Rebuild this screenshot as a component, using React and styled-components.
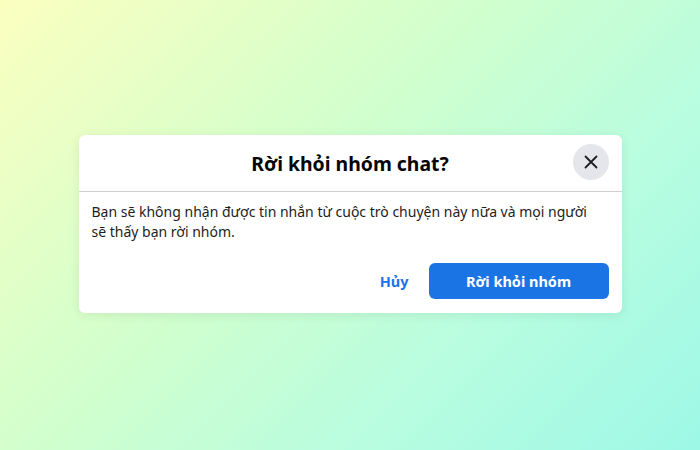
import React from "react";
import styled, { createGlobalStyle } from "styled-components";

const Global = createGlobalStyle`
  html, body { margin: 0; padding: 0; }
  body {
    width: 700px;
    height: 450px;
    font-family: "Noto Sans", "Open Sans", "Liberation Sans", sans-serif;
    overflow: hidden;
  }
`;

const Backdrop = styled.div`
  width: 700px;
  height: 450px;
  background: linear-gradient(135deg, #fbffc0 0%, #d2ffcc 40%, #b8fde0 70%, #9df8e6 100%);
  display: flex;
  align-items: center;
  justify-content: center;
`;

const Dialog = styled.div`
  width: 543px;
  margin-top: -2px;
  background: #ffffff;
  border-radius: 6px;
  box-shadow: 0 2px 12px rgba(0, 0, 0, 0.08);
  display: flex;
  flex-direction: column;
`;

const Header = styled.div`
  position: relative;
  height: 56px;
  display: flex;
  align-items: center;
  justify-content: center;
  border-bottom: 1px solid #ced0d4;
`;

const Title = styled.h2`
  margin: 0;
  font-size: 19.4px;
  font-weight: 700;
  color: #050505;
`;

const CloseButton = styled.button`
  position: absolute;
  right: 13px;
  top: 9px;
  width: 36px;
  height: 36px;
  border-radius: 50%;
  border: none;
  background: #e4e6eb;
  display: flex;
  align-items: center;
  justify-content: center;
  padding: 0;
  cursor: pointer;
`;

const Body = styled.p`
  margin: 0;
  padding: 10px 0 0 13px;
  width: 496px;
  font-size: 14px;
  line-height: 20px;
  color: #1c1e21;
`;

const Actions = styled.div`
  display: flex;
  justify-content: flex-end;
  align-items: center;
  gap: 20px;
  padding: 21px 13px 14px;
`;

const TextButton = styled.button`
  border: none;
  background: transparent;
  font-family: inherit;
  font-size: 14.5px;
  font-weight: 700;
  color: #1b74e4;
  padding: 0;
  height: 36px;
  cursor: pointer;
`;

const PrimaryButton = styled.button`
  border: none;
  width: 180px;
  height: 36px;
  border-radius: 6px;
  background: #1b74e4;
  color: #ffffff;
  font-family: inherit;
  font-size: 14.5px;
  font-weight: 700;
  cursor: pointer;
`;

export default function App() {
  return (
    <>
      <Global />
      <Backdrop>
        <Dialog>
          <Header>
            <Title>Rời khỏi nhóm chat?</Title>
            <CloseButton aria-label="Đóng">
              <svg width="14" height="14" viewBox="0 0 14 14">
                <path d="M1.5 1.5 L12.5 12.5 M12.5 1.5 L1.5 12.5" stroke="#1c1e21" strokeWidth="1.8" strokeLinecap="round" />
              </svg>
            </CloseButton>
          </Header>
          <Body>
            Bạn sẽ không nhận được tin nhắn từ cuộc trò chuyện này nữa và mọi người sẽ thấy bạn rời nhóm.
          </Body>
          <Actions>
            <TextButton>Hủy</TextButton>
            <PrimaryButton>Rời khỏi nhóm</PrimaryButton>
          </Actions>
        </Dialog>
      </Backdrop>
    </>
  );
}
